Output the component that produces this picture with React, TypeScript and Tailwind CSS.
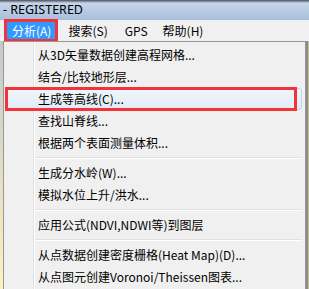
const items: (string | null)[] = [
  '从3D矢量数据创建高程网格...',
  '结合/比较地形层...',
  '生成等高线(C)...',
  '查找山脊线...',
  '根据两个表面测量体积...',
  null,
  '生成分水岭(W)...',
  '模拟水位上升/洪水...',
  null,
  '应用公式(NDVI,NDWI等)到图层',
  null,
  '从点数据创建密度栅格(Heat Map)(D)...',
  '从点图元创建Voronoi/Theissen图表...',
];

const font = { fontFamily: '"Noto Sans CJK SC", "Noto Sans", sans-serif' };

function MenuRow({ label, hover }: { label: string; hover?: boolean }) {
  return (
    <div className="relative h-[22px] flex items-center">
      {hover && (
        <div className="absolute left-[1px] right-[2px] top-0 bottom-0 rounded-[3px] border border-[#b8d6f0] bg-gradient-to-b from-[#f2f6fb] to-[#e1eaf5]" />
      )}
      <span className="relative pl-[33px] text-[12px] text-black leading-none whitespace-nowrap">{label}</span>
    </div>
  );
}

function Separator() {
  return (
    <div className="h-[8px] flex flex-col justify-center pl-[29px] pr-[2px]">
      <div className="h-px bg-[#e0e0e0]" />
      <div className="h-px bg-white" />
    </div>
  );
}

export default function App() {
  return (
    <div className="relative w-[309px] h-[289px] overflow-hidden bg-[#f0f0f0]" style={font}>
      {/* title bar */}
      <div className="h-[20px] flex items-center pl-[3px] bg-gradient-to-b from-[#4a5058] via-[#c6d6ea] via-[15%] to-[#a6bedb]">
        <span className="text-[12.5px] text-black leading-none" style={{ fontFamily: '"Noto Sans", sans-serif' }}>
          - REGISTERED
        </span>
      </div>

      {/* menu bar */}
      <div className="h-[21px] flex items-center text-[12px] text-black bg-[#f0f0f0]">
        <div className="ml-[7px] h-[18px] px-[5px] flex items-center bg-[#3399ff] text-white">分析(A)</div>
        <span className="ml-[12px]">搜索(S)</span>
        <span className="ml-[17px]">GPS</span>
        <span className="ml-[15px]">帮助(H)</span>
      </div>
      <div className="absolute left-[4px] top-[19px] w-[54px] h-[23px] border-[3px] border-[#f0343a]" />

      {/* body */}
      <div className="flex h-[248px]">
        <div className="w-[3px] bg-gradient-to-b from-[#c8c8c8] via-[#d9d6c4] via-[35%] to-[#fbf3c0]" />
        <div className="relative w-[303px] border border-b-0 border-[#979797] bg-[#f0f0f0] pt-[2px] px-[1px]">
          <div className="absolute left-[29px] top-0 bottom-0 w-px bg-[#e2e3e3]" />
          <div className="absolute left-[30px] top-0 bottom-0 w-px bg-white" />
          {items.map((it, i) =>
            it === null ? <Separator key={i} /> : <MenuRow key={i} label={it} hover={i === 2} />
          )}
        </div>
        <div className="w-[2px] bg-[#8c8c8c]" />
        <div className="w-[1px] bg-[#c2c49a]" />
      </div>

      {/* red marker on hovered item */}
      <div className="absolute left-[5px] top-[87px] w-[292px] h-[24px] border-[3px] border-[#f0343a]" />
    </div>
  );
}
